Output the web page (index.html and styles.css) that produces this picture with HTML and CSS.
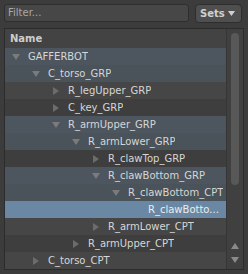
FILE: index.html
```html
<!DOCTYPE html>
<html lang="en">
<head>
    <meta charset="UTF-8">
    <meta name="viewport" content="width=device-width, initial-scale=1.0">
    <title>Hierarchy</title>
    <link rel="stylesheet" href="styles.css">
</head>
<body>

<!-- filter bar -->
<div class="top">
    <div class="filter">Filter...</div>
    <div class="sets">
        <span>Sets</span>
        <svg width="7" height="5" viewBox="0 0 7 5"><polygon points="0,0 7,0 3.5,5" fill="#d0d0d0"/></svg>
    </div>
</div>

<div class="panel">
    <div class="tree">
        <div class="header">Name</div>

        <div class="row blue l0"><span class="arrow down"></span><span class="name">GAFFERBOT</span></div>
        <div class="row blue2 l1"><span class="arrow down"></span><span class="name">C_torso_GRP</span></div>
        <div class="row grey l2"><span class="arrow right"></span><span class="name">R_legUpper_GRP</span></div>
        <div class="row dark l2"><span class="arrow right"></span><span class="name">C_key_GRP</span></div>
        <div class="row blue l2"><span class="arrow down"></span><span class="name">R_armUpper_GRP</span></div>
        <div class="row blue2 l3"><span class="arrow down"></span><span class="name">R_armLower_GRP</span></div>
        <div class="row dark l4"><span class="arrow right"></span><span class="name">R_clawTop_GRP</span></div>
        <div class="row blue l4"><span class="arrow down"></span><span class="name">R_clawBottom_GRP</span></div>
        <div class="row blue2 l5"><span class="arrow down"></span><span class="name">R_clawBottom_CPT</span></div>
        <div class="row selected l6"><span class="arrow"></span><span class="name">R_clawBotto...</span></div>
        <div class="row grey l4"><span class="arrow right"></span><span class="name">R_armLower_CPT</span></div>
        <div class="row dark l3"><span class="arrow right"></span><span class="name">R_armUpper_CPT</span></div>
        <div class="row grey l1"><span class="arrow right"></span><span class="name">C_torso_CPT</span></div>
    </div>

    <!-- scrollbar -->
    <div class="scroll">
        <div class="handle"></div>
        <div class="btns">
            <svg width="8" height="6" viewBox="0 0 8 6"><polygon points="4,0 8,6 0,6" fill="#8a8a8a"/></svg>
            <svg width="8" height="6" viewBox="0 0 8 6"><polygon points="0,0 8,0 4,6" fill="#8a8a8a"/></svg>
        </div>
    </div>
</div>

</body>
</html>
```

FILE: styles.css
```css
body {
    margin: 0;
    background-color: #3c3c3c;
    font-family: "DejaVu Sans", sans-serif;
    font-size: 10px;
    color: #d6d6d6;
}
.top {
    display: flex;
    gap: 6px;
    padding: 4px 0 0 4px;
    height: 19px;
}
.filter {
    width: 180px;
    height: 16px;
    line-height: 16px;
    padding-left: 3px;
    background-color: #474747;
    border: 1px solid #2e2e2e;
    border-radius: 3px;
    color: #a9a9a9;
}
.sets {
    box-sizing: border-box;
    width: 47px;
    height: 19px;
    display: flex;
    align-items: center;
    justify-content: space-between;
    padding: 0 6px 0 4px;
    background-color: #4f4f4f;
    border: 1px solid #2e2e2e;
    border-radius: 4px;
    font-weight: bold;
    color: #d0d0d0;
}

/* tree panel */
.panel {
    display: flex;
    margin: 5px 0 0 4px;
    width: 238px;
    height: 240px;
    border: 1px solid #2c2c2c;
}
.tree {
    width: 221px;
}
.header {
    height: 19px;
    line-height: 19px;
    padding-left: 5px;
    font-weight: bold;
    color: #cdcdcd;
    background-color: #434343;
}
.row {
    display: flex;
    align-items: center;
    height: 17px;
    white-space: nowrap;
    overflow: hidden;
}
.row .name {
    line-height: 17px;
    overflow: hidden;
    text-overflow: ellipsis;
    margin-left: 8px;
}
.arrow {
    flex: none;
    width: 8px;
    height: 8px;
    display: flex;
    align-items: center;
    justify-content: center;
}
.arrow.down::before {
    content: "";
    border-left: 4px solid transparent;
    border-right: 4px solid transparent;
    border-top: 6px solid #7b7b7b;
}
.arrow.right::before {
    content: "";
    border-top: 4px solid transparent;
    border-bottom: 4px solid transparent;
    border-left: 6px solid #6c6c6c;
}
.l0 { padding-left: 7px; }
.l1 { padding-left: 27px; }
.l2 { padding-left: 47px; }
.l3 { padding-left: 67px; }
.l4 { padding-left: 87px; }
.l5 { padding-left: 107px; }
.l6 { padding-left: 127px; }

.blue { background-color: #4d555e; }
.blue2 { background-color: #4a525a; }
.grey { background-color: #464646; }
.dark { background-color: #3e3e3e; }
.selected {
    background-color: #6a87a3;
    color: #ececec;
}

/* scrollbar */
.scroll {
    width: 17px;
    display: flex;
    flex-direction: column;
    align-items: center;
    background-color: #404040;
    border-left: 1px solid #363636;
    box-sizing: border-box;
}
.handle {
    margin-top: 4px;
    width: 8px;
    height: 152px;
    border-radius: 4px;
    background-color: #585858;
}
.btns {
    margin-top: auto;
    margin-bottom: 6px;
    display: flex;
    flex-direction: column;
    gap: 8px;
}
.btns svg {
    display: block;
}
```
